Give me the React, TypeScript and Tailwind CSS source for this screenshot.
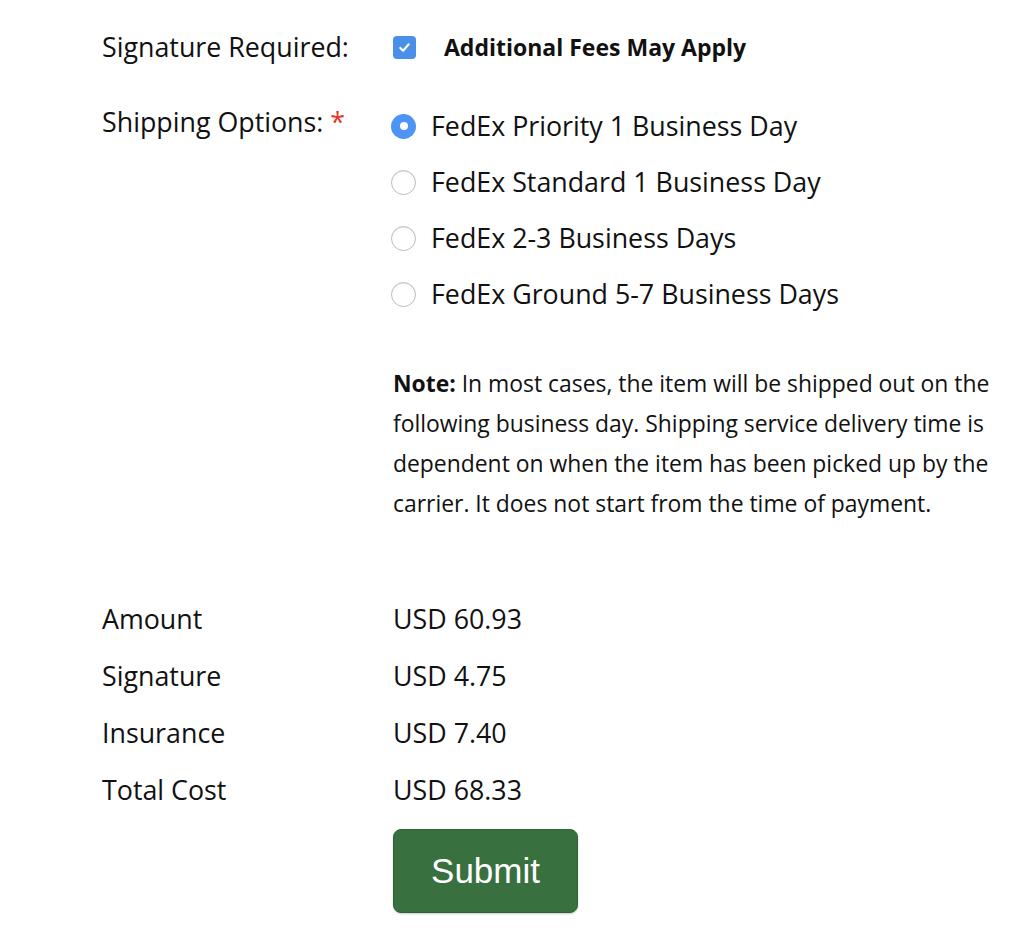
import React, { useState } from "react";

const options = [
  "FedEx Priority 1 Business Day",
  "FedEx Standard 1 Business Day",
  "FedEx 2-3 Business Days",
  "FedEx Ground 5-7 Business Days",
];

const costs = [
  { label: "Amount", value: "USD 60.93" },
  { label: "Signature", value: "USD 4.75" },
  { label: "Insurance", value: "USD 7.40" },
  { label: "Total Cost", value: "USD 68.33" },
];

function Radio({ checked }: { checked: boolean }) {
  return checked ? (
    <span className="flex h-[25px] w-[25px] items-center justify-center rounded-full bg-[#4d94f5]">
      <span className="h-[8px] w-[8px] rounded-full bg-white" />
    </span>
  ) : (
    <span className="h-[25px] w-[25px] rounded-full border border-[#bdbdbd] bg-white shadow-[inset_0_1px_1px_rgba(0,0,0,0.08)]" />
  );
}

export default function App() {
  const [selected, setSelected] = useState(0);

  return (
    <div className="min-h-[940px] bg-white pl-[102px] pt-[30px] text-[#111] font-['Open_Sans',sans-serif]">
      {/* signature */}
      <div className="flex h-[34px] items-center">
        <div className="w-[291px] text-[26.8px]">Signature Required:</div>
        <span className="flex h-[23px] w-[23px] items-center justify-center rounded-[4px] bg-[#4a90e8]">
          <svg viewBox="0 0 16 16" className="h-[15px] w-[15px]" fill="none">
            <path d="M3.5 8.5l3 3 6-7" stroke="white" strokeWidth="2.2" strokeLinecap="round" strokeLinejoin="round" />
          </svg>
        </span>
        <span className="ml-[28px] text-[23px] font-bold">Additional Fees May Apply</span>
      </div>

      {/* shipping options */}
      <div className="mt-[34px] flex">
        <div className="w-[289px] pt-[7px] text-[26.8px] leading-[34px]">
          Shipping Options: <span className="text-[#e5372b]">*</span>
        </div>
        <div className="flex flex-col">
          {options.map((o, i) => (
            <label
              key={o}
              className="flex h-[56px] cursor-pointer items-center gap-[15px]"
              onClick={() => setSelected(i)}
            >
              <Radio checked={selected === i} />
              <span className="text-[26.8px]">{o}</span>
            </label>
          ))}
        </div>
      </div>

      {/* note */}
      <p className="ml-[291px] mt-[42px] w-[608px] text-[22.9px] leading-[40px]">
        <b>Note:</b> In most cases, the item will be shipped out on the following business day. Shipping service
        delivery time is dependent on when the item has been picked up by the carrier. It does not start from the
        time of payment.
      </p>

      {/* costs */}
      <div className="mt-[67px]">
        {costs.map((c) => (
          <div key={c.label} className="flex h-[57px] items-center text-[26.8px]">
            <div className="w-[291px]">{c.label}</div>
            <div>{c.value}</div>
          </div>
        ))}
      </div>

      <button className="ml-[291px] mt-[10px] h-[84px] w-[185px] rounded-[8px] border border-[#2f6236] bg-[#38703f] text-[35px] text-white shadow-[0_1px_2px_rgba(0,0,0,0.2)] font-['Liberation_Sans',Arial,sans-serif]">
        Submit
      </button>
    </div>
  );
}
